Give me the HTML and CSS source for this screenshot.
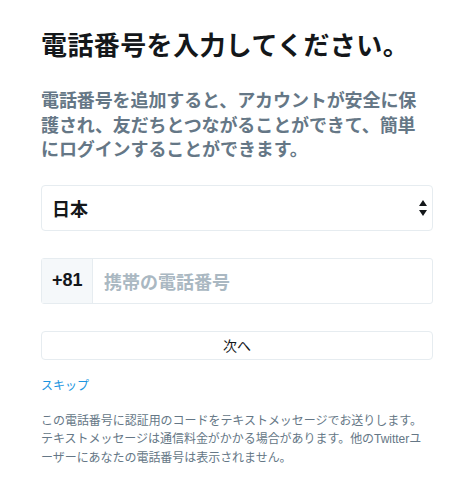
FILE: index.html
```html
<!DOCTYPE html>
<html lang="ja">
<head>
<meta charset="utf-8">
<title>電話番号を入力してください。</title>
<link rel="stylesheet" href="styles.css">
</head>
<body>
<main class="page">
  <h1 class="title">電話番号を入力してください。</h1>
  <p class="lead">電話番号を追加すると、アカウントが安全に保護され、友だちとつながることができて、簡単にログインすることができます。</p>
  <div class="select">
    <span class="select-value">日本</span>
    <svg class="select-arrows" width="8" height="16" viewBox="0 0 8 16"><path d="M4 0 L8 6 L0 6 Z M0 10 L8 10 L4 16 Z" fill="#14171a"/></svg>
  </div>
  <div class="phone">
    <span class="phone-code">+81</span>
    <span class="phone-placeholder">携帯の電話番号</span>
  </div>
  <button class="next" type="button">次へ</button>
  <a class="skip" href="#">スキップ</a>
  <p class="note">この電話番号に認証用のコードをテキストメッセージでお送りします。<br>テキストメッセージは通信料金がかかる場合があります。他のTwitterユ<br>ーザーにあなたの電話番号は表示されません。</p>
</main>
</body>
</html>
```
FILE: styles.css
```css
html, body {
  margin: 0;
  padding: 0;
  background: #ffffff;
}
body {
  font-family: "Liberation Sans", "Noto Sans CJK JP", sans-serif;
  color: #14171a;
}
.page {
  width: 392px;
  padding: 28px 0 0 41px;
  display: flex;
  flex-direction: column;
}
.title {
  margin: 0;
  font-size: 26px;
  font-weight: 700;
  line-height: 36px;
  letter-spacing: 0.4px;
}
.lead {
  margin: 25px 0 0;
  font-size: 18px;
  font-weight: 700;
  line-height: 24.5px;
  color: #657786;
  letter-spacing: -0.1px;
}
.select {
  margin-top: 22px;
  height: 46px;
  box-sizing: border-box;
  border: 1px solid #e6ecf0;
  border-radius: 4px;
  display: flex;
  align-items: center;
  justify-content: space-between;
  padding: 0 5px 0 10px;
}
.select-value {
  font-size: 18px;
  font-weight: 700;
}
.select-arrows {
  display: block;
}
.phone {
  margin-top: 27px;
  height: 46px;
  box-sizing: border-box;
  border: 1px solid #e6ecf0;
  border-radius: 3px;
  display: flex;
  align-items: stretch;
}
.phone-code {
  width: 51px;
  box-sizing: border-box;
  background: #f5f8fa;
  border-right: 1px solid #e6ecf0;
  display: flex;
  align-items: center;
  padding-left: 10px;
  font-size: 18px;
  font-weight: 700;
}
.phone-placeholder {
  display: flex;
  align-items: center;
  padding-left: 11px;
  font-size: 18px;
  font-weight: 700;
  color: #aab8c2;
}
.next {
  margin-top: 27px;
  height: 29px;
  box-sizing: border-box;
  border: 1px solid #e6ecf0;
  border-radius: 4px;
  background: #ffffff;
  font-family: inherit;
  font-size: 14px;
  color: #14171a;
  padding: 0;
}
.skip {
  margin-top: 17px;
  align-self: flex-start;
  font-size: 12px;
  line-height: 18px;
  color: #1b95e0;
  text-decoration: none;
}
.note {
  margin: 17px 0 0;
  font-size: 12px;
  line-height: 18.5px;
  color: #657786;
  letter-spacing: -0.04px;
}
```
